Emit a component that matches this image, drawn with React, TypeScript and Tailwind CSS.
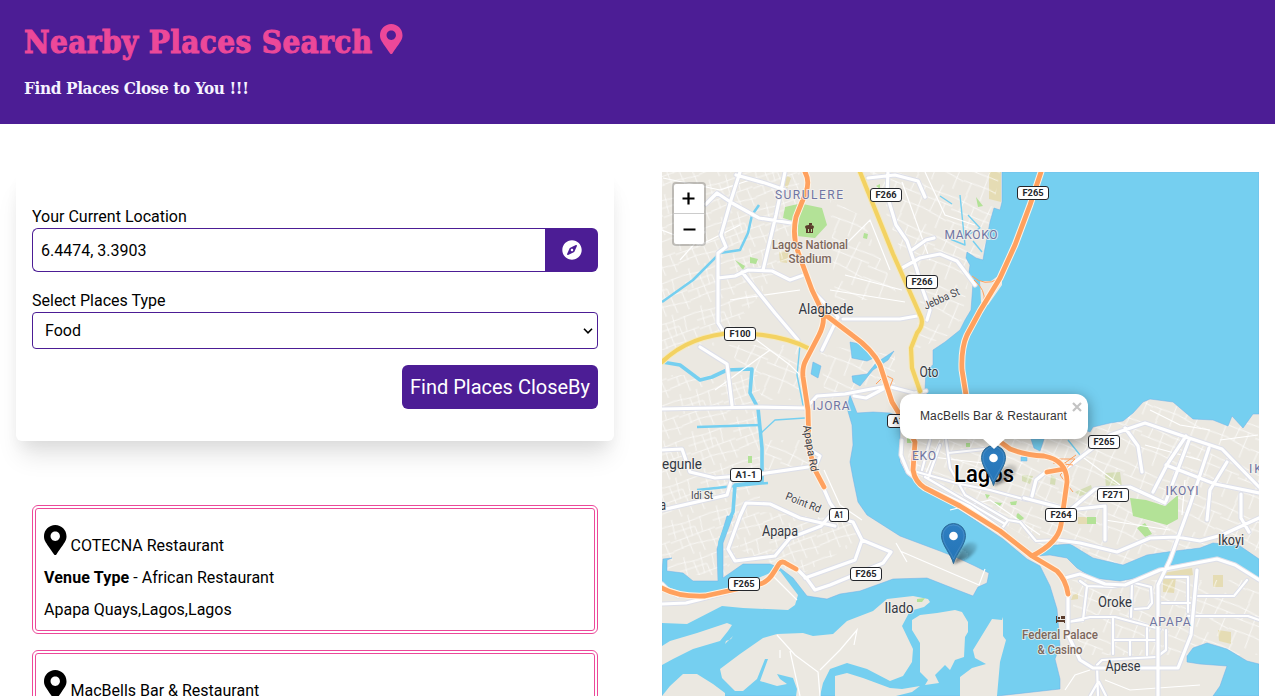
import React from "react";
import { FaCompass, FaMapMarkerAlt } from "react-icons/fa";

const places = [
  { name: "COTECNA Restaurant", type: "African Restaurant", address: "Apapa Quays,Lagos,Lagos" },
  { name: "MacBells Bar & Restaurant", type: "Restaurant", address: "Lagos,Lagos" },
];

const water = [
  "M1002 172V202L1000 210 994 208 990 222 985 248 983 260 976 258 967 252 966 258 970 265 969 272 973 283 971 310 965 320 960 330 945 342 933 350 933 365 926 370 925 390 940 420 940 430H1085L1090 432 1093 427 1110 423 1123 421 1133 413 1143 402 1150 399 1173 402 1193 419 1213 420 1228 426 1232 416 1243 428 1253 414H1259V172Z",
  "M850 395L847 408 852 425 853 445 850 462 853 478 858 502 867 515 900 536 940 551 960 559 975 566 989 573 987 583 978 587 973 596 960 591 927 578 893 579 860 591 840 594 827 599 807 596 793 578 780 568 770 564 743 564 723 578 723 543 733 516 727 516 717 549 718 581 693 581 683 573 667 571 667 560 672 558 663 559 662 572V696H997L1060 689 1060 679 1055 659 1060 645 1057 609 1050 586 1040 566 1027 559 1003 539 960 510 927 488 907 475 900 462 900 417 890 413 873 412 857 413Z",
  "M1035 556L1043 546 1070 544 1093 558 1123 565 1147 555 1167 552 1200 548 1213 543 1240 546 1259 559V580L1233 563 1217 558 1167 566 1147 576 1120 581 1093 578 1077 568 1067 558 1050 555Z",
  "M1187 662V656L1193 648 1207 643 1227 649 1247 661 1259 664V696H1213L1220 686 1227 666 1200 664Z",
  "M813 362L821 366 818 378 811 374ZM850 342L860 344 874 358 867 361 852 358ZM894 351L888 360 873 370 860 386 853 382 852 376 867 374 876 363ZM1031 439H1044L1040 451 1034 448ZM1021 457H1027V461H1021Z",
];

const islands = [
  "M662 585L690 595 707 593 740 586 770 573 780 571 798 595 795 605 788 610 743 608 722 606 687 624 662 623Z",
  "M662 646L670 641 697 633 727 623 732 625 728 631 720 641 693 649 673 659 662 665Z",
  "M662 696L670 686 683 674 697 674 713 684 725 693V696ZM725 644L733 636 731 639 726 641Z",
  "M720 669L740 654 763 638 777 634 803 633 813 636 833 634 847 621 873 611 887 599 913 596 928 599 930 602 924 607 910 611 902 626 913 649 912 662 903 676 890 681 867 669 847 663 830 669 823 683 820 696H796L797 689 793 678 777 674 780 679 787 684 777 686 760 681 768 659 765 659 757 679 743 691 735 691 722 678Z",
  "M912 620L920 615 937 613 955 610 962 612 968 622 968 632 965 637 964 657 955 660 950 670 945 665 935 675 939 683 925 685 928 680 920 672V643L912 630Z",
  "M835 696V676L847 673 863 678 890 688 902 689 920 686 912 692 896 696Z",
  "M992 619L1002 620 1003 617V636L1006 640 1000 662 997 696H960V677L972 668 986 664 975 658 973 650Z",
  "M980 281L991 281 1002 273V285L988 305 981 302Z",
];

const green = [
  "M785 207L798 204 796 222 783 218ZM803 204L822 208 827 225 815 238 797 236 799 216ZM876 186L880 184 880 189ZM864 233L868 234 867 239 863 238ZM735 260L745 266 743 270ZM750 257L758 259 756 264 750 263ZM976 197L983 206 978 207Z",
  "M1130 498L1146 500 1165 506 1178 495 1178 519 1167 525 1133 516ZM1137 528L1145 523 1152 534 1145 537ZM1018 513A4 4 0 1 0 1024 518ZM985 494L990 495 987 499ZM994 502L1002 503 1000 506 995 505ZM1010 502L1017 501 1016 505 1011 505ZM966 443H970V447H966ZM748 456H752V463H748ZM917 599L925 598 922 602 917 602ZM1087 517H1096V524H1087ZM907 438H913V443H907Z",
];

const tan = "M989 172H1001V202L989 199ZM1163 573L1192 568 1193 575 1176 578 1174 593 1163 592ZM1213 575H1223V587H1213ZM1218 630L1231 632V644L1219 641ZM1073 595L1078 593 1078 599 1071 600ZM783 174L791 178 787 189 782 183ZM779 252L789 250 787 263 780 262ZM1078 517H1087V524H1078Z";
const paleGreen = "M1105 473L1120 472 1122 487 1106 489ZM1075 492L1091 485 1093 492 1080 496ZM1022 475L1033 476 1030 484 1022 481ZM1051 475L1056 478 1055 485 1050 484Z";

const majorRoads = [
  "M740 172L731 200 721 235 726 247 718 253 718 323 725 334M706 204L717 193 732 203 759 218 791 223M736 175L765 183 785 190M785 172L776 215 763 270M718 278L735 276 748 270 772 271 790 280 804 275M742 272L775 313 798 340",
  "M888 172L887 195 896 225 907 241 917 270 921 285 930 310 927 320M902 268L920 258 940 254 957 261 975 285M843 319L900 319 917 316M815 293L838 317 822 350M912 250L926 240 934 238M868 178L895 175 918 181 925 197",
  "M662 409L760 407 806 408 817 396 845 394 887 386 914 393 926 391M700 347L727 364 732 405M854 396L866 398 885 388M662 450L682 449 690 472 715 478 760 474 808 467M809 449L820 456 815 468M823 487L830 503 835 510M662 510L727 495 732 478",
  "M740 516L746 503 770 504 800 518 835 526M740 516L728 549 735 561 775 556 790 538 821 526 835 510M834 517L853 522 862 540 891 552 883 563 830 585 815 590 807 579 797 569M862 540L855 560 805 578",
  "M662 604L686 603 730 592 760 584M662 584L669 591 678 596",
  "M902 440L901 455 908 472 925 486 970 507 1005 532M1024 498L1070 510 1095 489 1130 487 1165 503M1032 496L1036 480 1046 472M1068 467L1110 435 1145 423 1180 435 1222 449 1259 487M1125 428L1138 446 1142 472M1068 510L1105 506V540",
  "M1186 436L1168 463 1153 492M1189 440L1166 501M1209 448L1190 505 1170 560 1158 585V696M1166 465L1215 484 1259 493M1227 462L1210 490 1207 520M1241 494V518L1249 532M1177 537L1200 541 1222 535 1259 518M1058 540L1080 543 1117 552 1150 538 1177 537",
  "M1065 578L1080 574 1105 584 1125 585 1160 570 1217 559 1235 565 1259 580M1068 594V635L1080 660 1093 668H1178L1191 635 1197 570",
];

const mediumRoads = [
  "M1080 581L1087 586 1112 587 1135 583 1151 587 1152 603 1148 608 1135 609M1087 586 1083 620 1068 622 1090 617H1115L1160 629M1132 583 1131 617M1162 577H1188V612M1197 596 1234 596 1247 580M1188 616H1248L1259 620",
  "M1098 696L1097 665 1102 660 1156 657M1098 682L1090 696M1099 682L1106 696M1113 617V654M1113 640H1156M1130 640V655M1147 628V655M1166 630V650L1158 656M1162 603H1190",
  "M917 472L960 484 990 490 1027 500M946 440L950 468 965 495 1008 520 1003 527M925 477L1005 524M930 440 922 470M940 445 928 478M948 453 985 449M1008 520 1020 522 1036 541 1058 540",
];

const lanes = [
  "M662 230L700 245 740 225M663 178L720 190 750 180M675 210L705 232 680 260M750 335L790 365 805 380M730 300L800 290M770 350L715 390M824 470L840 505 862 520M902 182L930 260M925 172L945 215 975 225M845 245L870 220 890 270M830 290L905 302M845 275L902 290",
  "M1150 410L1180 425 1210 430M1145 445L1200 460M1080 455L1120 485M1220 440L1258 435M1185 480L1182 515M1105 520L1170 530M915 455L1000 465M925 475L940 440M950 510L990 500 1040 535M777 635L795 655 818 672 820 696M780 650V658M790 651L800 696M820 670L840 650 857 630 854 645M900 551L979 585 985 569M896 543L907 562",
  "M772 575L797 600M1065 690 1075 675 1090 670M1105 680 1130 690 1200 685",
];

const streams = [
  { d: "M662 302L693 280 720 253 740 250 748 233 752 215 759 205", w: 2.5 },
  { d: "M662 362L680 365 700 380 712 377 727 370 752 369 750 393 758 408 762 448 762 482 735 485 733 512 727 524 720 542 720 580", w: 3.6 },
  { d: "M697 427L760 425M697 490L735 486 768 483", w: 2.5 },
  { d: "M760 434L775 420 805 418M800 345L797 375 804 410M960 195L965 245 950 239M968 215L980 228 968 235M973 241L982 252M940 196L952 204M1068 440 1080 455", w: 1.4 },
];

const orange = [
  "M1041 172L1030 205 1015 245 1000 278 980 311 967 335Q961 348 962 370L966 395",
  "M805 172Q810 181 806 192L796 217Q792 235 798 252L812 290 823 313Q825 323 819 335L806 360Q802 367 803 377L808 410 809 449 815 470 824 487",
  "M823 313L852 335Q873 350 880 365L892 402 906 425 915 442 913 470Q915 482 925 488L960 506 1000 531 1032 556 1057 571Q1066 580 1068 594",
  "M995 438L1010 449Q1025 455 1044 456Q1067 460 1067 482L1061 525Q1058 543 1032 556M1047 472L1064 469",
  "M662 588Q678 597 705 596L760 584Q768 582 774 572L779 564Q782 560 787 564L796 569",
];

const yellow = [
  "M662 362Q690 335 735 333Q782 334 810 349",
  "M860 172L893 254 921 317Q924 325 917 333L911 348 912 368 920 391",
];

const shields = [
  { x: 886, y: 195, t: "F266" }, { x: 1033, y: 193, t: "F265" }, { x: 922, y: 282, t: "F266" },
  { x: 740, y: 334, t: "F100" }, { x: 903, y: 421, t: "A1-1" }, { x: 746, y: 475, t: "A1-1" },
  { x: 839, y: 515, t: "A1" }, { x: 866, y: 574, t: "F265" }, { x: 744, y: 584, t: "F265" },
  { x: 1104, y: 442, t: "F265" }, { x: 1113, y: 495, t: "F271" }, { x: 1061, y: 515, t: "F264" },
];

type Label = { x: number; y: number; t: string; w: number; kind: "town" | "area" | "poi" | "road"; r?: number };
const labels: Label[] = [
  { x: 826, y: 314, t: "Alagbede", w: 55, kind: "town" },
  { x: 929, y: 377, t: "Oto", w: 19, kind: "town" },
  { x: 780, y: 536, t: "Apapa", w: 36, kind: "town" },
  { x: 899, y: 613, t: "Ilado", w: 29, kind: "town" },
  { x: 1115, y: 607, t: "Oroke", w: 34, kind: "town" },
  { x: 1123, y: 671, t: "Apese", w: 35, kind: "town" },
  { x: 1231, y: 545, t: "Ikoyi", w: 26, kind: "town" },
  { x: 682, y: 469, t: "egunle", w: 40, kind: "town" },
  { x: 663, y: 510, t: "a", w: 6, kind: "town" },
  { x: 809, y: 199, t: "SURULERE", w: 68, kind: "area" },
  { x: 971, y: 239, t: "MAKOKO", w: 53, kind: "area" },
  { x: 831, y: 410, t: "IJORA", w: 37, kind: "area" },
  { x: 924, y: 460, t: "EKO", w: 24, kind: "area" },
  { x: 1182, y: 495, t: "IKOYI", w: 33, kind: "area" },
  { x: 1170, y: 626, t: "APAPA", w: 41, kind: "area" },
  { x: 1265, y: 473, t: "IKOY", w: 32, kind: "area" },
  { x: 810, y: 249, t: "Lagos National", w: 76, kind: "poi" },
  { x: 810, y: 263, t: "Stadium", w: 43, kind: "poi" },
  { x: 1060, y: 639, t: "Federal Palace", w: 76, kind: "poi" },
  { x: 1060, y: 654, t: "& Casino", w: 45, kind: "poi" },
  { x: 702, y: 499, t: "Idi St", w: 22, kind: "road" },
  { x: 802, y: 506, t: "Point Rd", w: 37, kind: "road", r: 22 },
  { x: 943, y: 302, t: "Jebba St", w: 38, kind: "road", r: -24 },
  { x: 807, y: 449, t: "Apapa Rd", w: 47, kind: "road", r: 80 },
];

const labelClass = {
  town: "fill-[#333842] text-[14px]",
  area: "fill-[#6f75a3] text-[12px]",
  poi: "fill-[#7d675c] text-[12px] font-medium",
  road: "fill-[#41434a] text-[11px]",
};

function Pin({ x, y }: { x: number; y: number }) {
  return (
    <g transform={`translate(${x} ${y})`}>
      <path d="M12 41L21 25C26 18 35 18 36 22S31 33 25 36Z" fill="url(#pinShadow)" filter="url(#soft)" />
      <path d="M12.5 40.5C10 31 .5 22 .5 12.5A12 12 0 0 1 24.5 12.5C24.5 22 15 31 12.5 40.5Z" fill="url(#pinBlue)" stroke="#2e6c97" />
      <path d="M12.5 36C9 27 2 21 2 12.5A10.5 10.5 0 0 1 23 12.5C23 21 16 27 12.5 36Z" fill="none" stroke="#fff" strokeOpacity=".12" />
      <circle cx="12.5" cy="13" r="4.3" fill="#fff" />
    </g>
  );
}

function Roads({ paths, color, casing, width }: { paths: string[]; color: string; casing: string; width: number }) {
  return (
    <g fill="none" strokeLinecap="round" strokeLinejoin="round">
      <path d={paths.join("")} stroke={casing} strokeWidth={width + 2} />
      <path d={paths.join("")} stroke={color} strokeWidth={width} />
    </g>
  );
}

function MapDrawing() {
  return (
    <svg viewBox="662 172 597 524" className="block h-full w-full">
      <defs>
        <pattern id="streetsA" width="47" height="39" patternUnits="userSpaceOnUse" patternTransform="rotate(-18)">
          <path d="M0 5L20 7 47 5M0 13H28L31 39M0 22L47 20M0 31L19 29 47 32M8 0L6 20M16 7L19 39M25 0L23 22M36 5L34 20M41 20L43 39M10 22V31" fill="none" stroke="#fff" strokeWidth=".9" opacity=".7" />
        </pattern>
        <pattern id="streetsB" width="53" height="43" patternUnits="userSpaceOnUse" patternTransform="rotate(24)">
          <path d="M0 7L30 9 53 7M0 19L53 16M0 31L26 29 53 32M9 0L8 19M20 8L23 43M36 0L34 30M45 16L46 43M8 30V43" fill="none" stroke="#fff" strokeWidth=".9" opacity=".75" />
        </pattern>
        <linearGradient id="pinBlue" x1="0" y1="0" x2="0" y2="1">
          <stop offset="0" stopColor="#2e7fc2" />
          <stop offset="1" stopColor="#2474b6" />
        </linearGradient>
        <linearGradient id="pinShadow" x1="0" y1="1" x2="1" y2="0">
          <stop offset="0" stopColor="#111" stopOpacity=".65" />
          <stop offset="1" stopColor="#111" stopOpacity=".05" />
        </linearGradient>
        <filter id="soft" x="-20%" y="-20%" width="140%" height="140%">
          <feGaussianBlur stdDeviation="1.8" />
        </filter>
      </defs>
      <rect x="662" y="172" width="597" height="524" fill="#ebe8e1" />
      <path d={tan} fill="#e5dcb4" />
      <path d={paleGreen} fill="#d5ddb6" />
      <path d="M662 172H800L795 250 720 345 662 350ZM662 375H760V500L725 575H662ZM740 510 850 520 862 540 800 575 740 550Z" fill="url(#streetsA)" />
      <path d="M870 172H1000L985 250 970 270 960 330 915 350 920 300ZM905 430H1090L1150 400 1259 425V550L1120 565 1040 545 910 470ZM1070 580H1259V655H1080ZM725 345 800 345 800 400 765 400ZM765 440 800 440 810 465 765 470ZM820 345 895 355 895 385 825 400ZM830 200 860 215 900 300 835 300Z" fill="url(#streetsB)" />
      <path d={green.join("")} fill="#b3e297" />
      <path d={water.join("")} fill="#75cff0" stroke="#6caee8" strokeWidth=".5" />
      <path d={islands.join("")} fill="#ebe8e1" />
      <path d="M917 599L925 598 922 602 917 602Z" fill="#b3e297" />
      {streams.map((s) => (
        <path key={s.d} d={s.d} fill="none" stroke="#75cff0" strokeWidth={s.w} strokeLinejoin="round" />
      ))}
      <path d={lanes.join("")} fill="none" stroke="#fff" strokeWidth="1.2" />
      <Roads paths={mediumRoads} color="#fff" casing="#dddfe9" width={2.2} />
      <Roads paths={majorRoads} color="#fff" casing="#dddfe9" width={3.2} />
      <g fill="none" stroke="#ffa15e" strokeWidth="1">
        <path d="M876 384L885 375 893 379 889 389M1053 459 1075 459 1060 475 1073 492M1053 463 1073 465M1055 470 1076 455M972 276Q985 287 998 279M974 280Q986 290 984 302" />
      </g>
      <Roads paths={yellow} color="#f3d262" casing="#f4e9c0" width={4.2} />
      <Roads paths={orange} color="#ffa15e" casing="#fff3e4" width={4.8} />
      <g fill="#5b3c2c">
        <path fillRule="evenodd" d="M805 227Q805 225 809 225V223H812V225H810Q814 225 814 227L813 229V233H806V229ZM808 229V232H809V229ZM811 229V232H812V229Z" />
        <path d="M1056 616H1057V620H1065V623H1064V622H1057V623H1056ZM1058 617H1060V619H1058ZM1061 616H1065V619H1061Z" />
      </g>
      {labels.map((l) => (
        <text
          key={l.t + l.x}
          x={l.x}
          y={l.y}
          textAnchor="middle"
          textLength={l.w}
          lengthAdjust={l.kind === "area" ? "spacing" : "spacingAndGlyphs"}
          transform={l.r ? `rotate(${l.r} ${l.x} ${l.y})` : undefined}
          stroke="#f4f2ee"
          strokeWidth="2"
          strokeOpacity=".8"
          paintOrder="stroke"
          className={labelClass[l.kind]}
        >
          {l.t}
        </text>
      ))}
      <text x="984" y="482" textAnchor="middle" textLength="60" lengthAdjust="spacingAndGlyphs" className="fill-black text-[23px] font-medium" stroke="#fff" strokeWidth="2" paintOrder="stroke">
        Lagos
      </text>
      {shields.map((s) => {
        const w = s.t === "A1" ? 19 : 31;
        return (
          <g key={s.t + s.x}>
            <rect x={s.x - w / 2} y={s.y - 6.5} width={w} height="13" rx="2.5" fill="#fff" stroke="#24262b" />
            <text x={s.x} y={s.y + 3.4} textAnchor="middle" textLength={w - 10} lengthAdjust="spacingAndGlyphs" className="fill-[#24262b] text-[9.5px] font-bold">
              {s.t}
            </text>
          </g>
        );
      })}
      <Pin x={941} y={523} />
      <Pin x={981} y={445} />
    </svg>
  );
}

export default function App() {
  return (
    <div className="h-[696px] overflow-hidden bg-white font-['Roboto',sans-serif] text-base text-black">
      <header className="flex h-[124px] flex-col bg-[#4c1d95] px-6 pt-6">
        <h1 className="flex h-9 items-start whitespace-nowrap font-['DejaVu_Serif_Condensed','DejaVu_Serif',serif] text-[31px] font-bold leading-9 text-[#ec4899]">
          <span className="w-[356px] tracking-[0.47px] [-webkit-text-stroke:1px_#ec4899]">Nearby Places Search</span>
          <FaMapMarkerAlt className="h-[30px] w-[22.5px]" />
        </h1>
        <p className="mt-[14px] whitespace-nowrap font-['DejaVu_Serif_Condensed','DejaVu_Serif',serif] text-[17px] font-bold leading-7 tracking-[-0.36px] text-[#f5f3ff]">
          Find Places Close to You !!!
        </p>
      </header>
      <main className="flex gap-12 px-4 pt-12">
        <div className="w-[598px] shrink-0">
          <form className="h-[269px] rounded-md px-4 pt-[33px] shadow-[0_20px_25px_-5px_rgba(0,0,0,0.1),0_8px_16px_-4px_rgba(0,0,0,0.06)]">
            <label className="block h-[23px] leading-6">Your Current Location</label>
            <div className="flex h-11">
              <input readOnly value="6.4474, 3.3903" className="min-w-0 flex-1 rounded-l-md border border-r-0 border-[#4c1d95] bg-white px-2 pt-px outline-none" />
              <button type="button" className="flex w-[53px] items-center justify-center rounded-r-md bg-[#4c1d95] text-white">
                <FaCompass className="size-5" />
              </button>
            </div>
            <label className="mt-[17px] block h-[23px] leading-6">Select Places Type</label>
            <div className="relative">
              <select className="block h-[37px] w-full appearance-none rounded border border-[#4c1d95] bg-white px-3">
                <option>Food</option>
              </select>
              <svg viewBox="0 0 10 6" className="pointer-events-none absolute right-[5px] top-4 h-[6px] w-[10px]">
                <path d="M1 .8L5 4.8 9 .8" fill="none" stroke="#000" strokeWidth="1.6" />
              </svg>
            </div>
            <div className="mt-4 flex justify-end">
              <button type="button" className="h-11 w-[196px] whitespace-nowrap rounded-md bg-[#4c1d95] text-xl text-white">Find Places CloseBy</button>
            </div>
          </form>
          <div className="mt-16 flex flex-col gap-4 px-4">
            {places.map((p) => (
              <article key={p.name} className="h-[129px] rounded-md border-4 border-double border-[#ec4899] px-2 pt-4">
                <div className="flex h-[41px] gap-1">
                  <FaMapMarkerAlt className="h-[30px] w-[22.5px]" />
                  <p className="pt-[9px] leading-6">{p.name}</p>
                </div>
                <p className="leading-6"><b className="tracking-[0.15px]">Venue Type</b> - {p.type}</p>
                <p className="mt-2 leading-6">{p.address}</p>
              </article>
            ))}
          </div>
        </div>
        <section className="relative h-[524px] w-[597px] shrink-0 overflow-hidden">
          <MapDrawing />
          <div className="absolute left-[10px] top-[10px] w-[34px] overflow-hidden rounded border-2 border-black/20 bg-white bg-clip-padding">
            <button className="flex h-[30px] w-full items-center justify-center border-b border-[#ccc] pr-px">
              <svg viewBox="0 0 13 13" className="size-[13px]"><path d="M6.5 0.5V12.5M.5 6.5H12.5" stroke="#000" strokeWidth="2.2" /></svg>
            </button>
            <button className="flex h-[30px] w-full items-center justify-center">
              <svg viewBox="0 0 13 13" className="size-[13px]"><path d="M.5 6.5H12.5" stroke="#000" strokeWidth="2.2" /></svg>
            </button>
          </div>
          <div className="absolute left-[238px] top-[222px] h-[45px] w-[188px] rounded-xl bg-white shadow-[0_3px_14px_rgba(0,0,0,0.4)]">
            <p className="whitespace-nowrap pl-5 pt-[14px] font-['Liberation_Sans',sans-serif] text-[12px] leading-[17px] tracking-[0.12px] text-[#333]">MacBells Bar &amp; Restaurant</p>
            <svg viewBox="0 0 10 10" className="absolute right-[6px] top-2 size-[10px]"><path d="M1 1L9 9M9 1L1 9" stroke="#c3c3c3" strokeWidth="2.2" /></svg>
            <svg viewBox="0 0 24 11" className="absolute left-[82px] top-[44px] h-[11px] w-6"><path d="M0 0H24L12 11Z" fill="#fff" /></svg>
          </div>
        </section>
      </main>
    </div>
  );
}
